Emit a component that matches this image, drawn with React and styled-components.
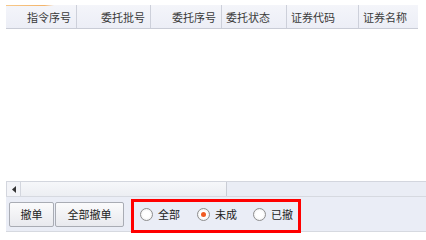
import React from "react";
import styled, { createGlobalStyle } from "styled-components";

const Global = createGlobalStyle`
  html, body { margin: 0; padding: 0; background: #fff; }
  body { font-family: "Noto Sans CJK SC", "Liberation Sans", sans-serif; }
`;

const Page = styled.div`
  width: 426px;
  height: 240px;
  padding: 5px 0 0 6px;
  box-sizing: border-box;
  display: flex;
  flex-direction: column;
  position: relative;
  overflow: hidden;
`;

const Grid = styled.div`
  height: 176px;
  display: flex;
  flex-direction: column;
  width: 412px;
`;

const Header = styled.div`
  position: relative;
  display: grid;
  grid-template-columns: 71px 74px 71px 65px 72px 59px;
  height: 24px;
  background: linear-gradient(#f4f5fa, #eceef6);
  border-bottom: 1px solid #c9ccd6;
  box-sizing: border-box;
`;

const SortMark = styled.div`
  position: absolute;
  left: 0;
  top: 0;
  width: 48px;
  height: 1px;
  background: linear-gradient(90deg, #f7c98a, #f3b46a 80%, rgba(243, 180, 106, 0));
`;

const HeadCell = styled.div`
  display: flex;
  align-items: center;
  justify-content: ${(p) => (p.$right ? "flex-end" : "flex-start")};
  padding: 0 5px 0 4px;
  font-size: 11px;
  color: #3a3a3a;
  border-right: 1px solid ${(p) => (p.$last ? "transparent" : "#cdd0da")};
  white-space: nowrap;
`;

const Body = styled.div`
  flex: 1;
  background: #fff;
`;

const ScrollBar = styled.div`
  display: flex;
  height: 16px;
  background: #eaedf5;
  border-top: 1px solid #d3d6de;
  border-bottom: 1px solid #d6d9e0;
  box-sizing: border-box;
  width: 420px;
`;

const ArrowBtn = styled.div`
  width: 15px;
  display: flex;
  align-items: center;
  justify-content: center;
  border-left: 1px solid #d3d6de;
  border-right: 1px solid #d3d6de;
  box-sizing: border-box;
  background: #f3f4f8;
`;

const Thumb = styled.div`
  width: 205px;
  background: linear-gradient(#f6f7fa, #eceef3);
  border-right: 1px solid #c9ccd4;
`;

const Toolbar = styled.div`
  position: relative;
  display: flex;
  align-items: center;
  height: 35px;
  width: 420px;
  background: #eaedf6;
  border-bottom: 1px solid #d6d9e0;
  box-sizing: border-box;
  padding-left: 3px;
`;

const Button = styled.button`
  height: 25px;
  padding: 0;
  width: ${(p) => p.$w}px;
  margin-right: 1px;
  font-family: "Noto Sans CJK SC", sans-serif;
  font-size: 11px;
  color: #222;
  background: linear-gradient(#fbfbfc, #e8e9ee);
  border: 1px solid #a9acb4;
  border-radius: 2px;
  display: flex;
  align-items: center;
  justify-content: center;
`;

const RadioGroup = styled.div`
  display: flex;
  align-items: center;
  margin-left: 15px;
  height: 100%;
`;

const RadioItem = styled.label`
  display: flex;
  align-items: center;
  gap: 5px;
  font-size: 11px;
  color: #222;
  margin-right: ${(p) => p.$mr}px;
`;

const Circle = styled.span`
  width: 13px;
  height: 13px;
  border-radius: 50%;
  border: 1px solid #8e8e8e;
  background: radial-gradient(circle, #fff 40%, #e8e8e8);
  display: flex;
  align-items: center;
  justify-content: center;
  box-sizing: border-box;
`;

const Dot = styled.span`
  width: 5px;
  height: 5px;
  border-radius: 50%;
  background: #f05a22;
`;

const Highlight = styled.div`
  position: absolute;
  left: 125px;
  top: 2px;
  width: 170px;
  height: 34px;
  border: 3px solid #ff0000;
  box-sizing: border-box;
`;

const cols = [
  { t: "指令序号", r: true },
  { t: "委托批号", r: true },
  { t: "委托序号", r: true },
  { t: "委托状态" },
  { t: "证券代码" },
  { t: "证券名称", last: true },
];

export default function App() {
  return (
    <>
      <Global />
      <Page>
        <Grid>
          <Header>
            <SortMark />
            {cols.map((c) => (
              <HeadCell key={c.t} $right={c.r} $last={c.last}>
                {c.t}
              </HeadCell>
            ))}
          </Header>
          <Body />
        </Grid>
        <ScrollBar>
          <ArrowBtn>
            <svg width="4" height="7" viewBox="0 0 4 7">
              <path d="M4 0 L0 3.5 L4 7 Z" fill="#333" />
            </svg>
          </ArrowBtn>
          <Thumb />
        </ScrollBar>
        <Toolbar>
          <Button $w={45}>撤单</Button>
          <Button $w={69}>全部撤单</Button>
          <RadioGroup>
            <RadioItem $mr={17}>
              <Circle />
              全部
            </RadioItem>
            <RadioItem $mr={16}>
              <Circle>
                <Dot />
              </Circle>
              未成
            </RadioItem>
            <RadioItem $mr={0}>
              <Circle />
              已撤
            </RadioItem>
          </RadioGroup>
          <Highlight />
        </Toolbar>
      </Page>
    </>
  );
}
